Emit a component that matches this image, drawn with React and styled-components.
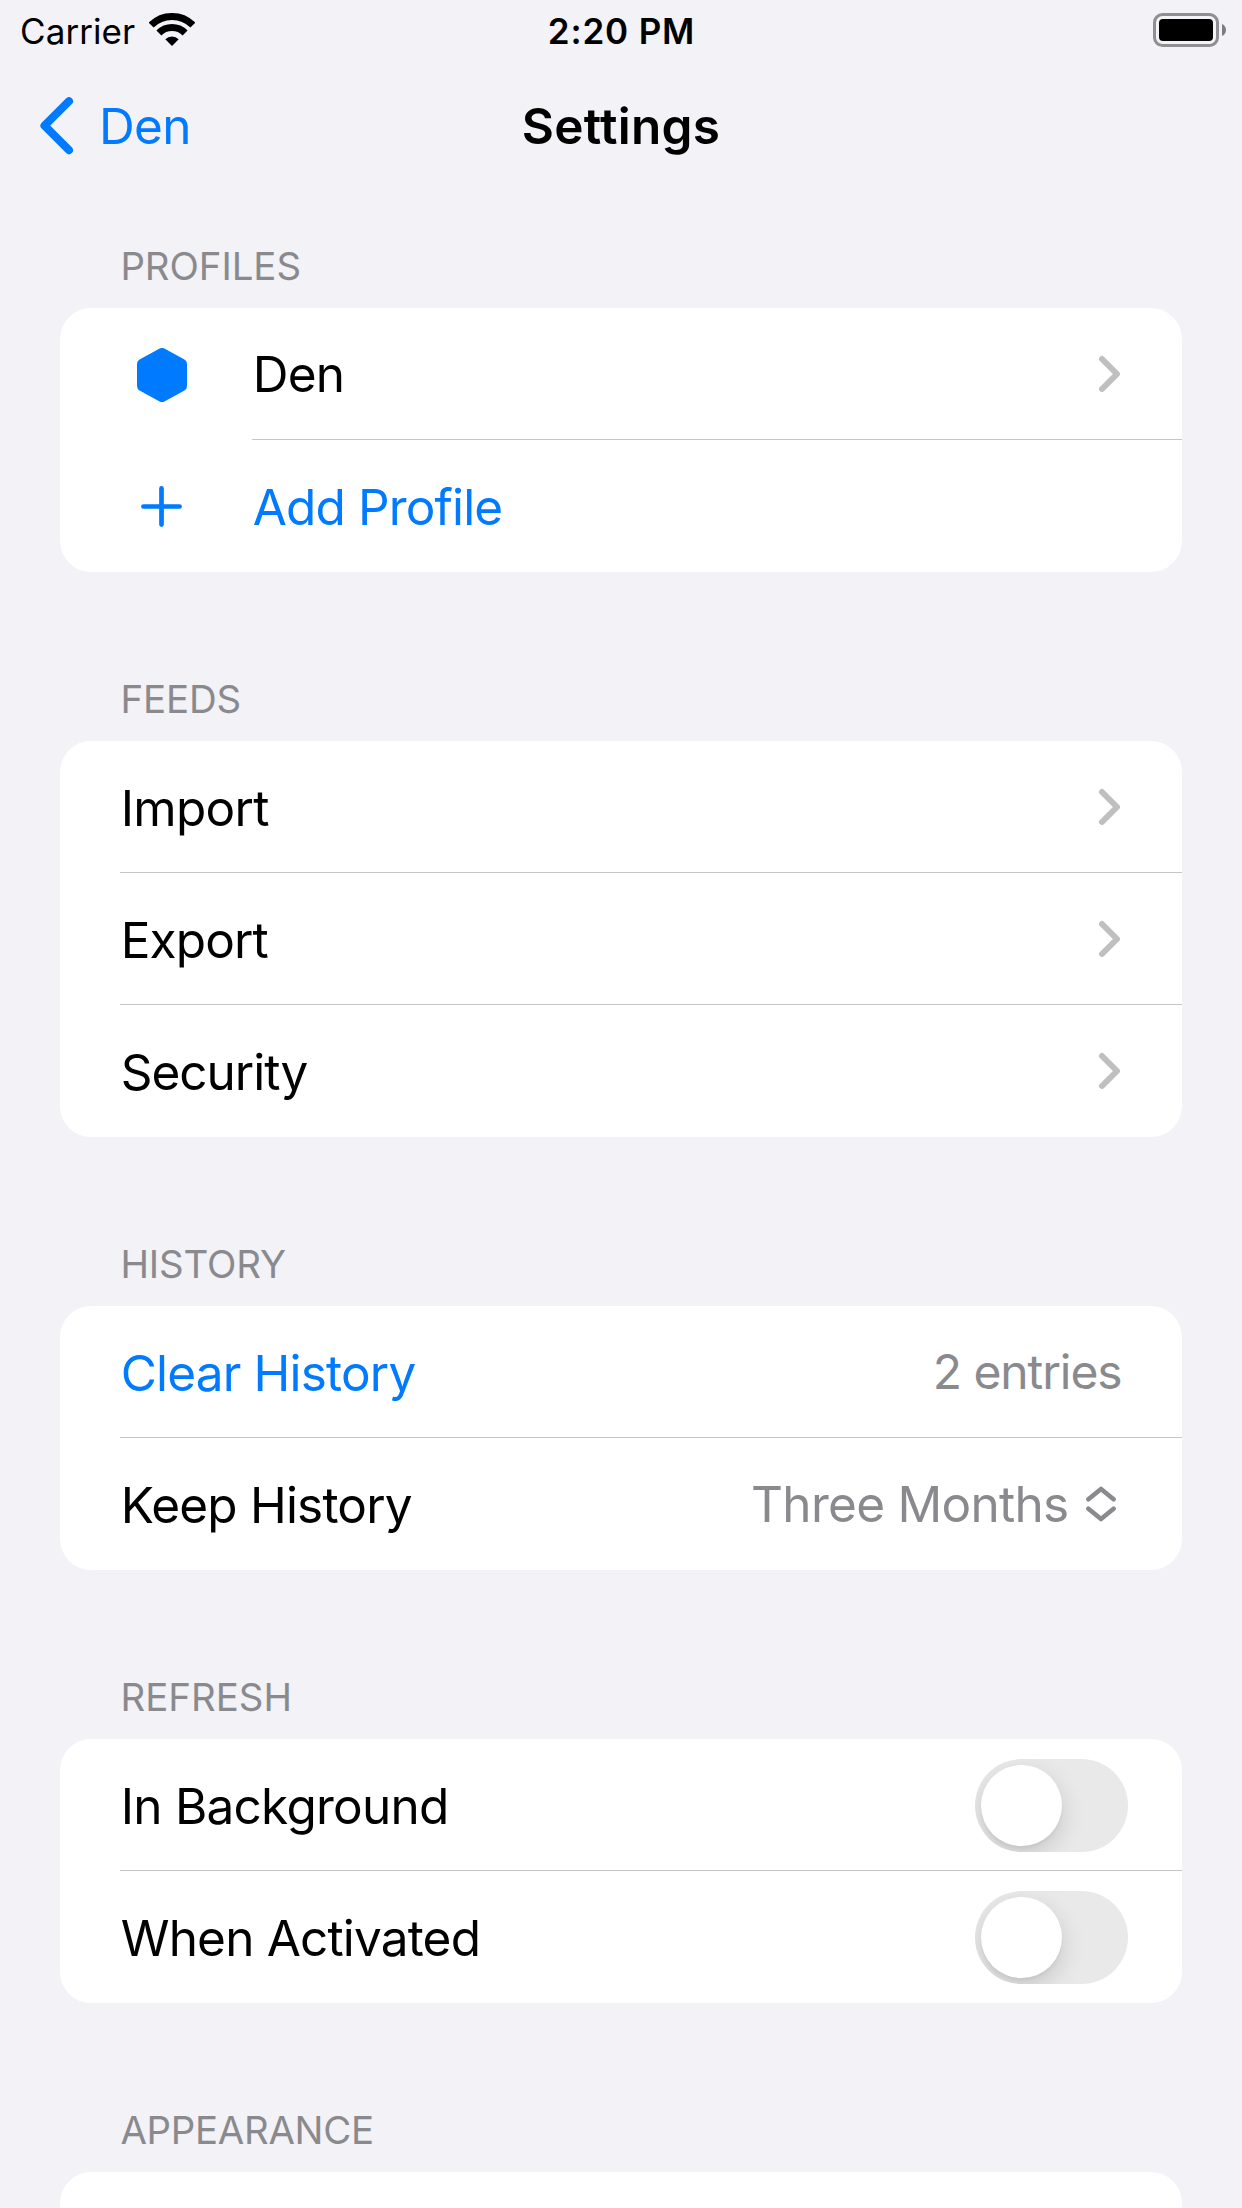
import React from "react";
import styled, { createGlobalStyle } from "styled-components";

const GlobalStyle = createGlobalStyle`
  * { box-sizing: border-box; }
  html, body { margin: 0; padding: 0; background: #f2f2f7; }
  body { font-family: Inter, "Liberation Sans", sans-serif; color: #000; }
`;

const BLUE = "#007aff";
const GRAY = "#8a8a8e";

const Screen = styled.div`
  width: 1242px;
  height: 2208px;
  overflow: hidden;
  display: flex;
  flex-direction: column;
  background: #f2f2f7;
`;

const StatusBar = styled.header`
  flex: none;
  height: 60px;
  display: grid;
  grid-template-columns: 1fr auto 1fr;
  align-items: start;
  padding: 0 15px;
`;

const Carrier = styled.div`
  display: flex;
  gap: 14px;
  padding-left: 5px;
  font-size: 35px;
  line-height: 62px;
  letter-spacing: ${(p) => p.$track}px;
  svg { margin-top: 13px; }
`;

const Clock = styled.div`
  padding-left: 1px;
  font-size: 35px;
  font-weight: 560;
  line-height: 62px;
  letter-spacing: ${(p) => p.$track}px;
`;

const Battery = styled.div`
  justify-self: end;
  padding-top: 13px;
  svg { display: block; }
`;

const NavBar = styled.nav`
  flex: none;
  height: 132px;
  display: grid;
  grid-template-columns: 1fr auto 1fr;
  align-items: center;
  padding: 0 40px;
`;

const BackButton = styled.a`
  display: flex;
  align-items: center;
  gap: 25px;
  color: ${BLUE};
  font-size: 49.5px;
  line-height: 60px;
  letter-spacing: ${(p) => p.$track}px;
`;

const Title = styled.h1`
  margin: 0;
  font-size: 49.5px;
  font-weight: 600;
  line-height: 60px;
  letter-spacing: ${(p) => p.$track}px;
`;

const List = styled.main`
  flex: none;
  display: flex;
  flex-direction: column;
  padding: 0 60px;
`;

const Section = styled.section`
  display: flex;
  flex-direction: column;
  padding-top: ${(p) => p.$top ?? 103}px;
`;

const SectionTitle = styled.h2`
  margin: 0;
  height: 66px;
  padding-left: 60.4px;
  color: ${GRAY};
  font-size: 38.4px;
  font-weight: 400;
  line-height: 48px;
  letter-spacing: ${(p) => p.$track}px;
`;

const Card = styled.div`
  background: #fff;
  border-radius: 31px;
  overflow: hidden;
`;

const Row = styled.div`
  height: 132px;
  display: flex;
  padding-left: 60px;
`;

const IconSlot = styled.div`
  width: 132px;
  display: flex;
  align-items: center;
  padding-top: 1px;
  padding-left: ${(p) => p.$inset}px;
`;

const RowBody = styled.div`
  flex: 1;
  display: flex;
  align-items: center;
  justify-content: space-between;
  padding-right: ${(p) => p.$end ?? 61}px;
  box-shadow: ${(p) => (p.$last ? "none" : "inset 0 -1px 0 #c6c6c8")};
`;

const Label = styled.span`
  font-size: 49.5px;
  line-height: 60px;
  white-space: pre;
  padding-top: ${(p) => (p.$raised ? 0 : 2)}px;
  padding-left: 0.7px;
  color: ${(p) => (p.$accent ? BLUE : "#000")};
  letter-spacing: ${(p) => p.$track ?? 0}px;
`;

const Value = styled.span`
  display: flex;
  align-items: center;
  gap: 17.5px;
  font-size: ${(p) => p.$size ?? 49.5}px;
  line-height: 60px;
  white-space: pre;
  color: ${GRAY};
  letter-spacing: ${(p) => p.$track ?? 0}px;
`;

const Track = styled.div`
  width: 153px;
  height: 93px;
  margin-top: 1px;
  padding: 6px;
  border-radius: 47px;
  background: #e9e9ea;
  overflow: hidden;
`;

const Knob = styled.div`
  width: 81px;
  height: 81px;
  border-radius: 50%;
  background: #fff;
  box-shadow: 0 9px 24px rgba(0, 0, 0, 0.15), 0 3px 3px rgba(0, 0, 0, 0.04);
`;

const Toggle = () => (
  <Track role="switch" aria-checked="false">
    <Knob />
  </Track>
);

const Wifi = () => (
  <svg width="46" height="34" viewBox="0 0 46 34">
    <g fill="none" stroke="#000" strokeWidth="7">
      <path d="M2.140 12.140A29.500 29.500 0 0 1 43.860 12.140" />
      <path d="M9.920 19.920A18.500 18.500 0 0 1 36.080 19.920" />
    </g>
    <path d="M23 33L16.300 26.300A9.700 9.700 0 0 1 29.700 26.300Z" />
  </svg>
);

const BatteryIcon = () => (
  <svg width="74" height="34" viewBox="0 0 74 34">
    <rect x="1.5" y="1.5" width="63" height="31" rx="8" fill="none" stroke="#8f8f92" strokeWidth="3" />
    <rect x="6" y="6" width="54" height="22" rx="4" />
    <path d="M69 11c2.6 1.200 4 3.500 4 6s-1.400 4.800-4 6z" fill="#7d7d80" />
  </svg>
);

const BackChevron = () => (
  <svg width="34" height="58" viewBox="0 0 34 58">
    <path d="M29 4.200L4.500 28.700L29 53.200" fill="none" stroke={BLUE} strokeWidth="8" strokeLinecap="round" strokeLinejoin="round" />
  </svg>
);

const Chevron = () => (
  <svg width="23" height="38" viewBox="0 0 23 38">
    <path d="M4 4L19 19L4 34" fill="none" stroke="#bfbfbf" strokeWidth="6" strokeLinecap="round" strokeLinejoin="round" />
  </svg>
);

const Hexagon = () => (
  <svg width="51" height="54" viewBox="0 0 51 54">
    <path
      d="M25 5L45 16V38L25 49L5 38V16Z"
      fill={BLUE}
      stroke={BLUE}
      strokeWidth="10"
      strokeLinejoin="round"
    />
  </svg>
);

const Plus = () => (
  <svg width="41" height="41" viewBox="0 0 41 41">
    <path d="M20.500 2.400V38.600M2.400 20.500H38.600" stroke={BLUE} strokeWidth="4.700" strokeLinecap="round" />
  </svg>
);

const UpDown = () => (
  <svg width="30" height="36" viewBox="0 0 30 36">
    <g fill="none" stroke={GRAY} strokeWidth="4.600" strokeLinecap="round" strokeLinejoin="round">
      <path d="M2.400 13.300L15 2.900L27.600 13.300" />
      <path d="M2.400 22.700L15 33.100L27.600 22.700" />
    </g>
  </svg>
);

export default function App() {
  return (
    <Screen>
      <GlobalStyle />
      <StatusBar>
        <Carrier $track={0.08}>
          Carrier
          <Wifi />
        </Carrier>
        <Clock $track={0.85}>2:20 PM</Clock>
        <Battery>
          <BatteryIcon />
        </Battery>
      </StatusBar>
      <NavBar>
        <BackButton $track={-0.7}>
          <BackChevron />
          Den
        </BackButton>
        <Title $track={0.28}>Settings</Title>
      </NavBar>
      <List>
        <Section $top={50}>
          <SectionTitle $track={-0.05}>PROFILES</SectionTitle>
          <Card>
            <Row>
              <IconSlot $inset={17}>
                <Hexagon />
              </IconSlot>
              <RowBody>
                <Label $raised $track={-0.75}>Den</Label>
                <Chevron />
              </RowBody>
            </Row>
            <Row>
              <IconSlot $inset={21}>
                <Plus />
              </IconSlot>
              <RowBody $last>
                <Label $accent $track={-0.85}>Add Profile</Label>
              </RowBody>
            </Row>
          </Card>
        </Section>
        <Section>
          <SectionTitle $track={-0.1}>FEEDS</SectionTitle>
          <Card>
            <Row>
              <RowBody>
                <Label $track={-0.7}>Import</Label>
                <Chevron />
              </RowBody>
            </Row>
            <Row>
              <RowBody>
                <Label $track={-0.85}>Export</Label>
                <Chevron />
              </RowBody>
            </Row>
            <Row>
              <RowBody $last>
                <Label $track={-1}>Security</Label>
                <Chevron />
              </RowBody>
            </Row>
          </Card>
        </Section>
        <Section>
          <SectionTitle $track={-0.1}>HISTORY</SectionTitle>
          <Card>
            <Row>
              <RowBody $end={60.5}>
                <Label $accent $track={-0.82}>Clear History</Label>
                <Value $size={48} $track={-1.1}>2 entries</Value>
              </RowBody>
            </Row>
            <Row>
              <RowBody $last $end={66}>
                <Label $track={-0.8}>Keep History</Label>
                <Value $track={-0.71}>
                  Three Months
                  <UpDown />
                </Value>
              </RowBody>
            </Row>
          </Card>
        </Section>
        <Section>
          <SectionTitle $track={0.03}>REFRESH</SectionTitle>
          <Card>
            <Row>
              <RowBody $end={54}>
                <Label $track={-0.75}>In Background</Label>
                <Toggle />
              </RowBody>
            </Row>
            <Row>
              <RowBody $last $end={54}>
                <Label $track={-0.82}>When Activated</Label>
                <Toggle />
              </RowBody>
            </Row>
          </Card>
        </Section>
        <Section>
          <SectionTitle $track={-0.3}>APPEARANCE</SectionTitle>
          <Card>
            <Row />
          </Card>
        </Section>
      </List>
    </Screen>
  );
}
